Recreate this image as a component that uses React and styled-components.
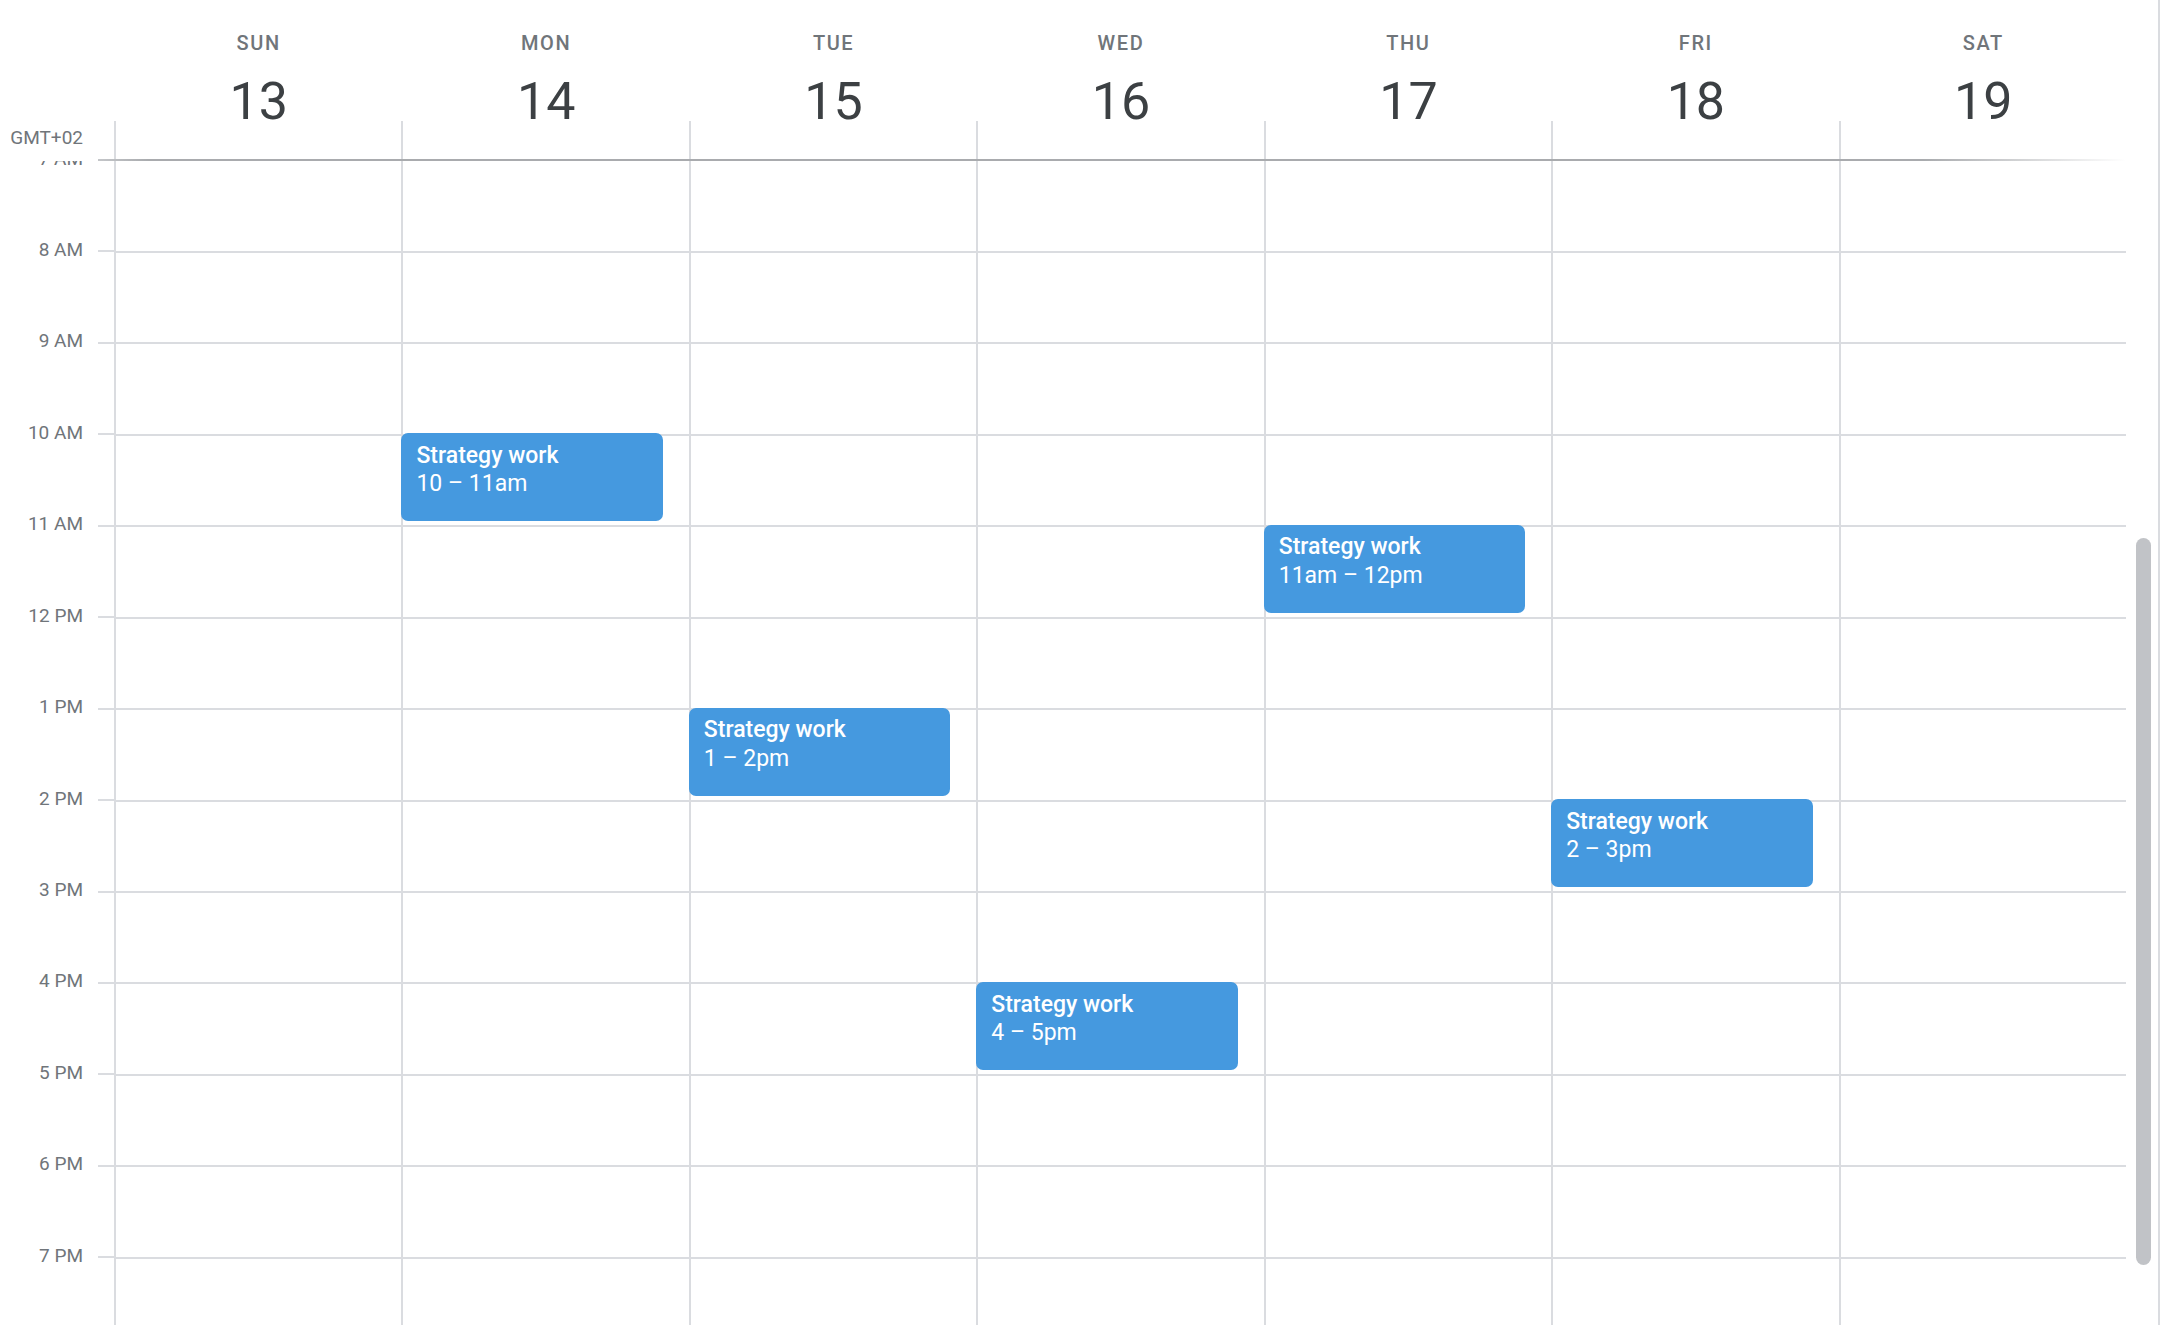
import React from "react";
import styled, { createGlobalStyle } from "styled-components";

const HOUR = 91.45;

const GlobalStyle = createGlobalStyle`
  html, body {
    margin: 0;
    padding: 0;
    background: #fff;
  }
  body {
    font-family: Roboto, "Noto Sans", Arial, sans-serif;
    -webkit-font-smoothing: antialiased;
  }
`;

const Calendar = styled.div`
  width: calc(100% - 2px);
  height: 100vh;
  display: flex;
  flex-direction: column;
  overflow: hidden;
  border-right: 2px solid #dadce0;
  background: #fff;
`;

const Header = styled.div`
  display: flex;
  flex-direction: column;
  flex: none;
`;

const HeaderRow = styled.div`
  display: grid;
  grid-template-columns: 114px repeat(7, 1fr) 32px;
  height: 159px;
`;

const ZoneCell = styled.div`
  display: flex;
  flex-direction: column;
  justify-content: flex-end;
  align-items: flex-end;
  padding: 0 31px 11px 0;
  font-size: 19px;
  line-height: 20px;
  color: #70757a;
`;

const DayHead = styled.div`
  display: flex;
  flex-direction: column;
  align-items: center;
`;

const DayName = styled.div`
  margin-top: 33px;
  padding-left: 2px;
  font-size: 20px;
  line-height: 20px;
  font-weight: 500;
  letter-spacing: 1.6px;
  color: #70757a;
`;

const DayNum = styled.div`
  margin-top: 31px;
  padding-left: 2px;
  font-size: 52px;
  line-height: 36px;
  font-weight: 400;
  color: #3c4043;
`;

const Tick = styled.div`
  align-self: stretch;
  margin-top: auto;
  height: 38px;
  border-left: 2px solid #dadce0;
`;

const Rule = styled.div`
  height: 2px;
  margin: 0 32px 0 98px;
  background: linear-gradient(
    to right,
    #c4c6c9 0,
    #a9abae 2.5%,
    #a9abae 90%,
    rgba(169, 171, 174, 0) 100%
  );
`;

const Body = styled.div`
  flex: 1;
  display: flex;
  min-height: 0;
`;

const Viewport = styled.div`
  flex: 1;
  overflow: hidden;
`;

const Grid = styled.div`
  display: grid;
  grid-template-columns: 114px repeat(7, 1fr);
  margin-top: -${HOUR}px;
`;

const Gutter = styled.div`
  display: flex;
  flex-direction: column;
`;

const HourCell = styled.div`
  height: ${HOUR}px;
  display: flex;
  align-items: flex-end;
  justify-content: flex-end;
`;

const HourLabel = styled.span`
  margin: 0 15px -7.5px 0;
  font-size: 19px;
  line-height: 20px;
  color: #70757a;
  white-space: nowrap;
`;

const HourTick = styled.div`
  width: 16px;
  height: 2px;
  background: #dadce0;
`;

const DayColumn = styled.div`
  position: relative;
  border-left: 2px solid #dadce0;
  background-image: repeating-linear-gradient(
    to bottom,
    transparent 0,
    transparent ${HOUR - 2}px,
    #dadce0 ${HOUR - 2}px,
    #dadce0 ${HOUR}px
  );
`;

const Event = styled.div`
  position: absolute;
  left: -2px;
  width: calc(100% - 24px);
  height: 88px;
  box-sizing: border-box;
  padding: 8.5px 15px;
  border-radius: 7px;
  background: #4599df;
  color: #fff;
  font-size: 23px;
  line-height: 28.5px;
  overflow: hidden;
`;

const EventTitle = styled.div`
  font-weight: 500;
`;

const EventTime = styled.div`
  font-weight: 400;
`;

const ScrollTrack = styled.div`
  width: 32px;
  flex: none;
  display: flex;
  flex-direction: column;
  align-items: center;
`;

const Thumb = styled.div`
  width: 15px;
  height: 727px;
  margin: 377px 0 0 2px;
  border-radius: 8px;
  background: #c1c3c7;
`;

const days = [
  { name: "SUN", num: 13 },
  { name: "MON", num: 14 },
  { name: "TUE", num: 15 },
  { name: "WED", num: 16 },
  { name: "THU", num: 17 },
  { name: "FRI", num: 18 },
  { name: "SAT", num: 19 },
];

// hours shown in the gutter, starting at 7 AM (the 6 AM row is scrolled off)
const hours = [
  "7 AM", "8 AM", "9 AM", "10 AM", "11 AM", "12 PM", "1 PM", "2 PM",
  "3 PM", "4 PM", "5 PM", "6 PM", "7 PM", "8 PM", "9 PM",
];

const events = [
  { day: 1, start: 10, time: "10 – 11am" },
  { day: 2, start: 13, time: "1 – 2pm" },
  { day: 3, start: 16, time: "4 – 5pm" },
  { day: 4, start: 11, time: "11am – 12pm" },
  { day: 5, start: 14, time: "2 – 3pm" },
];

export default function App() {
  return (
    <>
      <GlobalStyle />
      <Calendar>
        <Header>
          <HeaderRow>
            <ZoneCell>GMT+02</ZoneCell>
            {days.map((d) => (
              <DayHead key={d.name}>
                <DayName>{d.name}</DayName>
                <DayNum>{d.num}</DayNum>
                <Tick />
              </DayHead>
            ))}
            <div />
          </HeaderRow>
          <Rule />
        </Header>
        <Body>
          <Viewport>
            <Grid>
              <Gutter>
                {hours.map((h) => (
                  <HourCell key={h}>
                    <HourLabel>{h}</HourLabel>
                    <HourTick />
                  </HourCell>
                ))}
              </Gutter>
              {days.map((d, i) => (
                <DayColumn key={d.name}>
                  {events
                    .filter((e) => e.day === i)
                    .map((e) => (
                      <Event
                        key={e.start}
                        style={{ top: `${(e.start - 6) * HOUR - 2}px` }}
                      >
                        <EventTitle>Strategy work</EventTitle>
                        <EventTime>{e.time}</EventTime>
                      </Event>
                    ))}
                </DayColumn>
              ))}
            </Grid>
          </Viewport>
          <ScrollTrack>
            <Thumb />
          </ScrollTrack>
        </Body>
      </Calendar>
    </>
  );
}
